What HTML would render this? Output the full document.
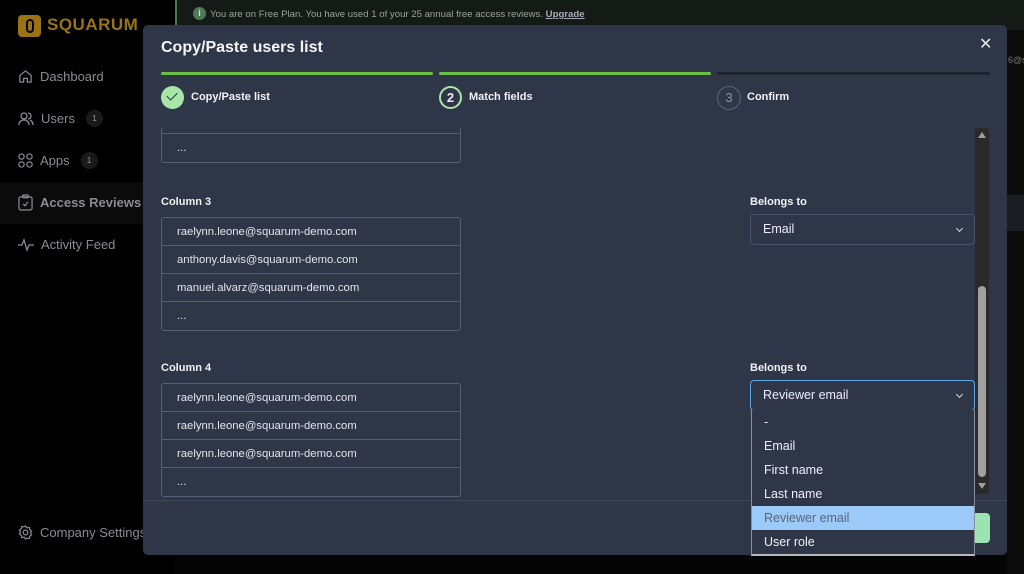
<!DOCTYPE html>
<html><head><meta charset="utf-8"><style>
*{box-sizing:border-box;margin:0;padding:0}
body{width:1024px;height:574px;overflow:hidden;background:#050505;font-family:"Liberation Sans","DejaVu Sans",sans-serif;position:relative;color:#e8eaee}
.abs{position:absolute}
.side{left:0;top:0;width:175px;height:574px;background:#000}
.nav{left:18px;font-size:13px;color:#8a8c90;display:flex;align-items:center;gap:7px}
.badge{display:inline-block;width:17px;height:17px;border-radius:50%;background:#1a1a1a;color:#999;font-size:8px;text-align:center;line-height:17px;margin-left:4px}
.modal{left:143px;top:25px;width:864px;height:530px;background:#2e3648;border-radius:5px}
.bar{height:3px;top:72px;border-radius:2px}
.lbl{font-size:11px;font-weight:bold;color:#f0f2f4}
.box{left:161px;width:300px;border:1px solid #566072;border-radius:3px}
.row{height:28px;border-bottom:1px solid #566072;font-size:11.3px;line-height:29px;padding-left:15px;color:#e4e6ea}
.row:last-child{border-bottom:none}
.sel{left:750px;width:225px;height:31px;border:1px solid #4a5468;border-radius:4px;font-size:12.5px;line-height:29px;padding-left:12px;color:#eef}
.chev{position:absolute;right:12px;top:11px;width:5px;height:5px;border-right:1.5px solid #ddd;border-bottom:1.5px solid #ddd;transform:rotate(45deg)}
.opt{height:24px;line-height:24px;padding-left:12px;font-size:12.5px;color:#eef}
</style></head><body>
<div class="abs side"></div>
<div class="abs" style="left:175px;top:0;width:849px;height:30px;background:#141a16"></div>
<div class="abs" style="left:175px;top:0;width:2px;height:30px;background:#4a7a4a"></div>
<div class="abs" style="left:193px;top:7px;width:13px;height:13px;border-radius:50%;background:#4d7a55;color:#cde;font-size:9px;text-align:center;line-height:13px;font-weight:bold">i</div>
<div class="abs" style="left:210px;top:9px;font-size:9.6px;color:#9aa39c">You are on Free Plan. You have used 1 of your 25 annual free access reviews. <u style="font-weight:bold;color:#aab">Upgrade</u></div>
<div class="abs" style="left:1007px;top:30px;width:17px;height:544px;background:#0c0c0c"></div>
<div class="abs" style="left:1007px;top:195px;width:17px;height:36px;background:#1a1d22"></div>
<div class="abs" style="left:1008px;top:55px;font-size:9px;color:#777">6@s</div>
<div class="abs" style="left:18px;top:15px;width:23px;height:22px;background:#9a7414;border-radius:4px"></div>
<div class="abs" style="left:26px;top:19px;width:8px;height:14px;border:2px solid #000;border-radius:4px"></div>
<div class="abs" style="left:47px;top:15px;font-size:17px;font-weight:bold;color:#9a7414;letter-spacing:0.5px">SQUARUM</div>
<div class="abs nav" style="top:69px"><svg width="15" height="15" viewBox="0 0 16 16" fill="none" stroke="#8a8c90" stroke-width="1.3"><path d="M2 7L8 2l6 5v7H10v-4H6v4H2z"/></svg>Dashboard</div>
<div class="abs nav" style="top:110px"><svg width="16" height="14" viewBox="0 0 16 14" fill="none" stroke="#8a8c90" stroke-width="1.3"><circle cx="6" cy="4" r="3"/><path d="M1 13c0-3 2-5 5-5s5 2 5 5M10 1a3 3 0 010 6M12 8c2 1 3 3 3 5"/></svg>Users<span class="badge">1</span></div>
<div class="abs nav" style="top:152px"><svg width="15" height="15" viewBox="0 0 16 16" fill="none" stroke="#8a8c90" stroke-width="1.3"><rect x="1" y="1" width="5.5" height="5.5" rx="2.5"/><rect x="9.5" y="1" width="5.5" height="5.5" rx="2.5"/><rect x="1" y="9.5" width="5.5" height="5.5" rx="2.5"/><rect x="9.5" y="9.5" width="5.5" height="5.5" rx="2.5"/></svg>Apps<span class="badge">1</span></div>
<div class="abs" style="left:0;top:182px;width:175px;height:42px;background:#0b0b0b"></div>
<div class="abs nav" style="top:194px;font-weight:bold"><svg width="15" height="17" viewBox="0 0 16 18" fill="none" stroke="#8a8c90" stroke-width="1.3"><rect x="1" y="3" width="14" height="14" rx="2"/><rect x="5" y="1" width="6" height="3" rx="1"/><path d="M5.5 10.5l2 2 3-4"/></svg>Access Reviews</div>
<div class="abs nav" style="top:237px"><svg width="16" height="14" viewBox="0 0 16 14" fill="none" stroke="#8a8c90" stroke-width="1.3"><path d="M0 7h4l2-5 3 10 2-5h5"/></svg>Activity Feed</div>
<div class="abs nav" style="top:525px"><svg width="15" height="15" viewBox="0 0 16 16" fill="none" stroke="#8a8c90" stroke-width="1.3"><circle cx="8" cy="8" r="2.5"/><path d="M8 1l1.5 2 2.5-.5.5 2.5 2 1.5-1.2 2 1.2 2-2 1.5-.5 2.5-2.5-.5L8 15l-1.5-2-2.5.5-.5-2.5-2-1.5 1.2-2-1.2-2 2-1.5.5-2.5 2.5.5z"/></svg>Company Settings</div>

<div class="abs modal"></div>
<div class="abs" style="left:161px;top:39px;font-size:16px;font-weight:bold;color:#f4f5f7">Copy/Paste users list</div>
<div class="abs" style="left:979px;top:34px;font-size:16px;color:#e6e8ec">✕</div>
<div class="abs bar" style="left:161px;width:272px;background:#6bbf45"></div>
<div class="abs bar" style="left:439px;width:272px;background:#6bbf45"></div>
<div class="abs bar" style="left:717px;width:273px;background:#1d2230"></div>
<div class="abs" style="left:161px;top:86px;width:23px;height:23px;border-radius:50%;background:#a8e6a8"></div>
<div class="abs" style="left:169px;top:90px;width:6px;height:10px;border-right:1.5px solid #234;border-bottom:1.5px solid #234;transform:rotate(45deg)"></div>
<div class="abs lbl" style="left:191px;top:91px">Copy/Paste list</div>
<div class="abs" style="left:439px;top:86px;width:23px;height:23px;border-radius:50%;border:2px solid #a8e6a8;font-size:13px;font-weight:bold;text-align:center;line-height:19px">2</div>
<div class="abs lbl" style="left:469px;top:91px">Match fields</div>
<div class="abs" style="left:717px;top:86px;width:24px;height:24px;border-radius:50%;border:1.5px solid #5a6478;font-size:13px;color:#8a93a4;text-align:center;line-height:21px">3</div>
<div class="abs lbl" style="left:747px;top:91px">Confirm</div>

<div class="abs box" style="top:128px;border-top:none;border-radius:0 0 3px 3px"><div class="row" style="height:6px;border-bottom:1px solid #566072"></div><div class="row">...</div></div>

<div class="abs lbl" style="left:161px;top:196px">Column 3</div>
<div class="abs box" style="top:217px"><div class="row">raelynn.leone@squarum-demo.com</div><div class="row">anthony.davis@squarum-demo.com</div><div class="row">manuel.alvarz@squarum-demo.com</div><div class="row">...</div></div>
<div class="abs lbl" style="left:750px;top:196px">Belongs to</div>
<div class="abs sel" style="top:214px">Email<span class="chev"></span></div>

<div class="abs lbl" style="left:161px;top:362px">Column 4</div>
<div class="abs box" style="top:383px"><div class="row">raelynn.leone@squarum-demo.com</div><div class="row">raelynn.leone@squarum-demo.com</div><div class="row">raelynn.leone@squarum-demo.com</div><div class="row">...</div></div>
<div class="abs lbl" style="left:750px;top:362px">Belongs to</div>

<div class="abs" style="left:975px;top:128px;width:14px;height:366px;background:#2a2a2a"></div>
<div class="abs" style="left:978px;top:132px;width:0;height:0;border-left:4px solid transparent;border-right:4px solid transparent;border-bottom:6px solid #a0a0a0"></div>
<div class="abs" style="left:978px;top:286px;width:8px;height:191px;background:#a0a0a0;border-radius:4px"></div>
<div class="abs" style="left:978px;top:483px;width:0;height:0;border-left:4px solid transparent;border-right:4px solid transparent;border-top:6px solid #a0a0a0"></div>

<div class="abs" style="left:143px;top:500px;width:864px;height:1px;background:#3e4759"></div>
<div class="abs" style="left:970px;top:513px;width:20px;height:30px;background:#9ce3b4;border-radius:4px"></div>

<div class="abs sel" style="top:380px;border-color:#5aa8e6">Reviewer email<span class="chev"></span></div>
<div class="abs" style="left:751px;top:410px;width:224px;height:146px;background:#2e3648;border:1px solid #8a8e96;border-top:none;border-bottom:2px solid #b5b8bd">
<div class="opt">-</div><div class="opt">Email</div><div class="opt">First name</div><div class="opt">Last name</div><div class="opt" style="background:#9ccaf8;color:#5a6478">Reviewer email</div><div class="opt">User role</div>
</div>
</body></html>
